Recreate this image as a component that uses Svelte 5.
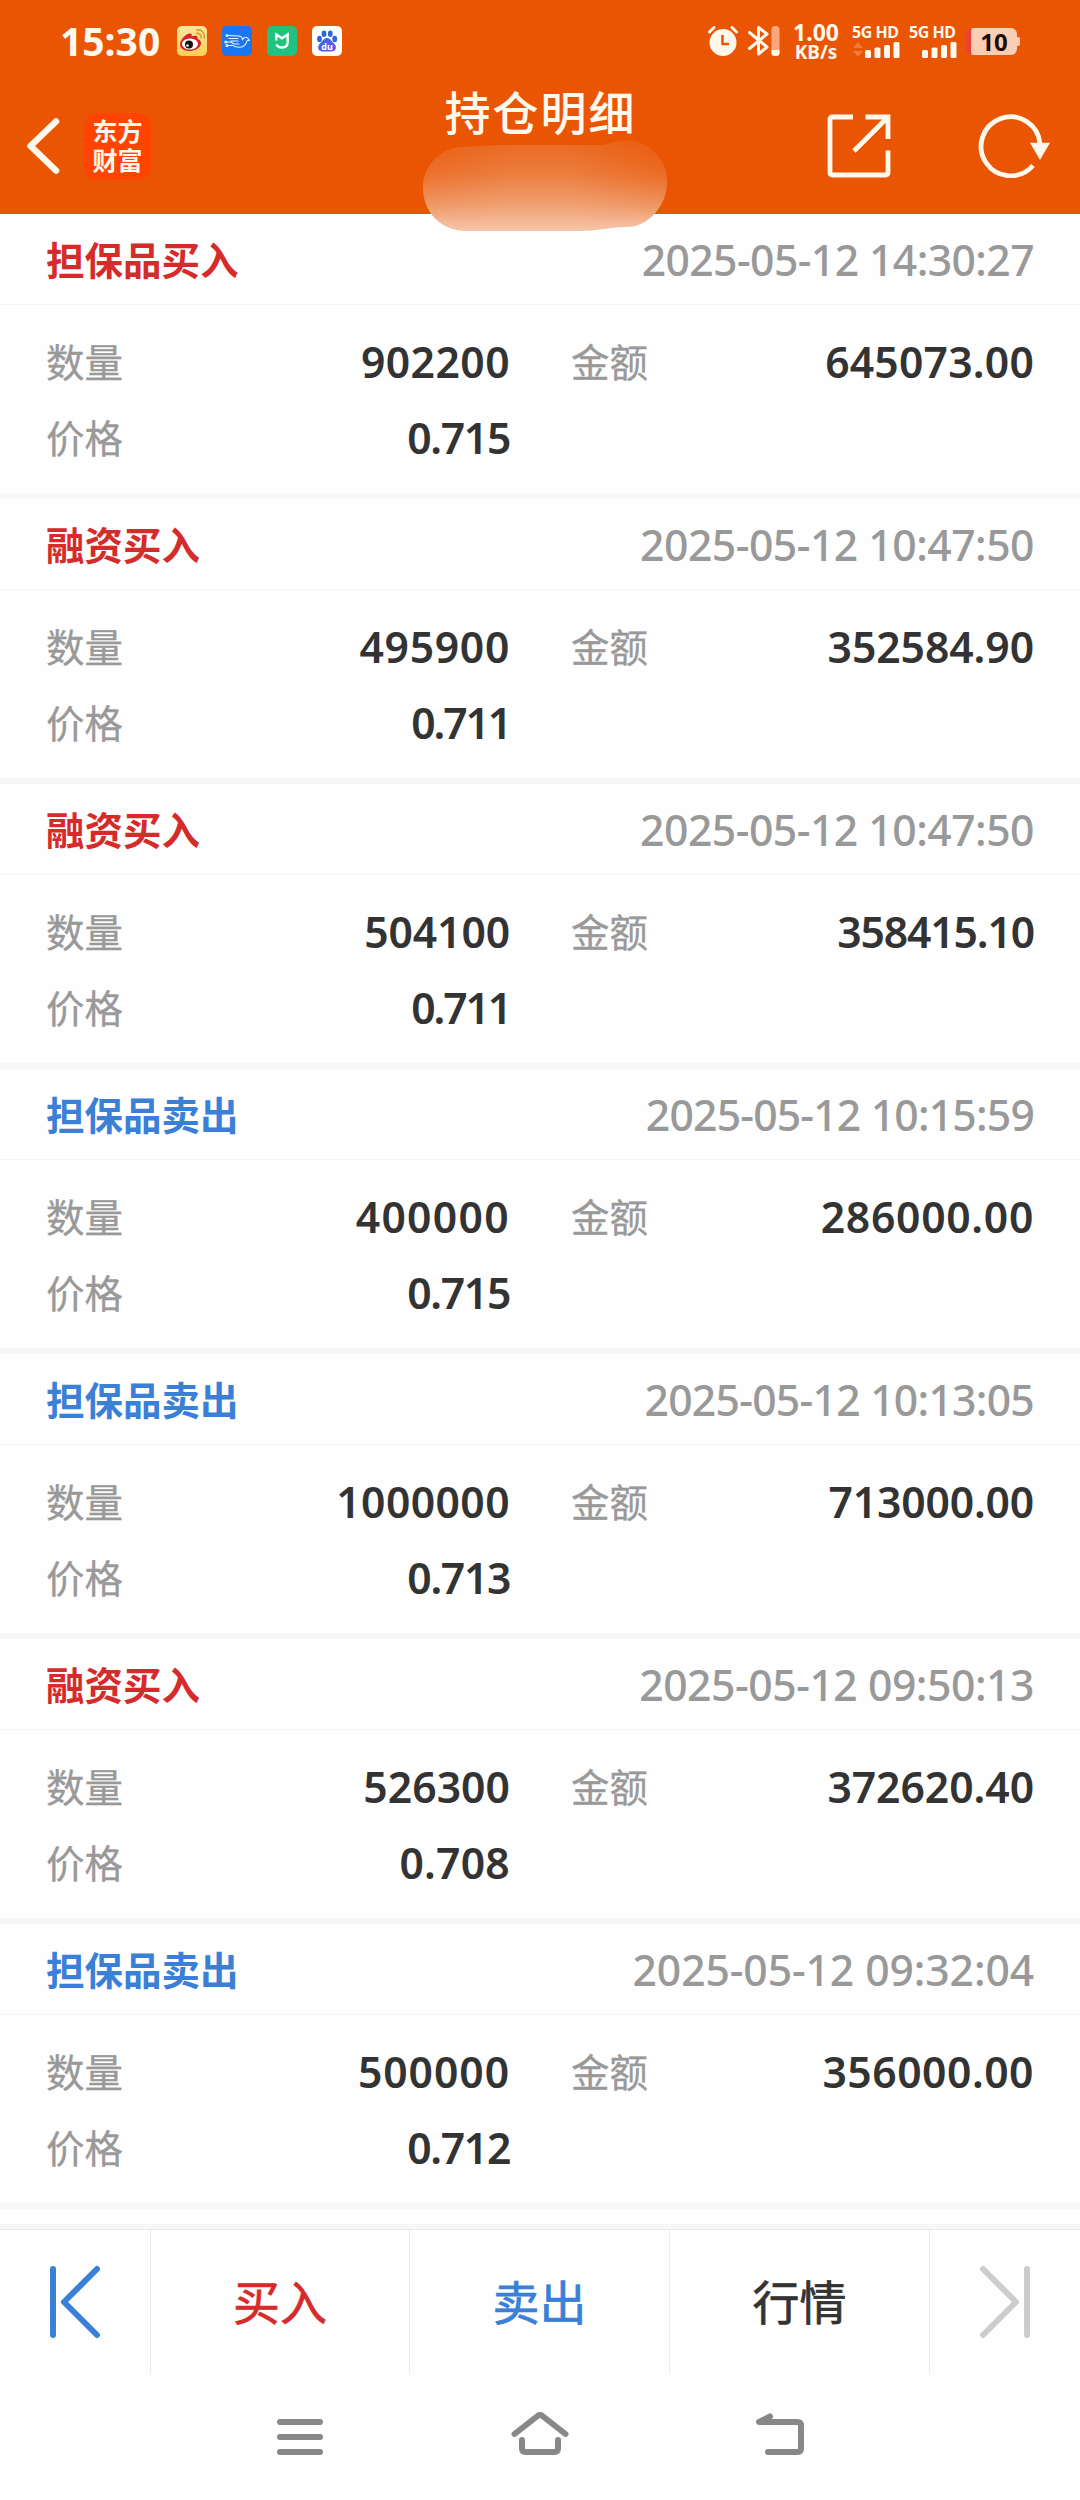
<script>
  const trades = [
    { type: "担保品买入", side: "buy", time: "2025-05-12 14:30:27", count: "902200", amount: "645073.00", price: "0.715" },
    { type: "融资买入", side: "buy", time: "2025-05-12 10:47:50", count: "495900", amount: "352584.90", price: "0.711" },
    { type: "融资买入", side: "buy", time: "2025-05-12 10:47:50", count: "504100", amount: "358415.10", price: "0.711" },
    { type: "担保品卖出", side: "sell", time: "2025-05-12 10:15:59", count: "400000", amount: "286000.00", price: "0.715" },
    { type: "担保品卖出", side: "sell", time: "2025-05-12 10:13:05", count: "1000000", amount: "713000.00", price: "0.713" },
    { type: "融资买入", side: "buy", time: "2025-05-12 09:50:13", count: "526300", amount: "372620.40", price: "0.708" },
    { type: "担保品卖出", side: "sell", time: "2025-05-12 09:32:04", count: "500000", amount: "356000.00", price: "0.712" },
  ];

  // Noto Sans digits are all one width, so tighten or loosen each number
  // towards the width it would have with proportional figures
  const bold = { 0: 25.8, 1: 19.5, 2: 23.6, 3: 23.4, 4: 25.8, 5: 23.6, 6: 25, 7: 23, 8: 25, 9: 25, ".": 11.5 };
  const light = { 0: 24.8, 1: 18.2, 2: 23.3, 3: 23.3, 4: 25, 5: 23.4, 6: 24, 7: 21, 8: 24, 9: 23.5, "-": 19.5, ":": 10.8, " ": 13 };
  const notoWidth = { ".": 12, "-": 13.7, ":": 11.7, " ": 11.1 };

  const spacing = (text, widths) => {
    let diff = 0;
    for (const c of text) {
      diff += widths[c] - (notoWidth[c] ?? 24.5);
    }
    return (diff / text.length).toFixed(2) + "px";
  };
</script>

<div class="page">
  <header>
    <div class="status">
      <div class="left">
        <span class="clock">15:30</span>
        <!-- weibo -->
        <svg class="app" viewBox="0 0 30 30">
          <defs>
            <linearGradient id="weibo" x1="0" y1="0" x2="0" y2="1">
              <stop offset="0" stop-color="#fbe7a0" />
              <stop offset="1" stop-color="#fdce54" />
            </linearGradient>
          </defs>
          <rect width="30" height="30" rx="5" fill="url(#weibo)" />
          <path d="M3 18.500c0-5 6-11 10-11 2 0 2 2 1.500 3 3-1.500 7-1 6 2.500 2 .5 3.500 2 3.500 4 0 4-5 8-11 8s-10-2.500-10-6.500z" fill="#d8212a" />
          <ellipse cx="13" cy="18" rx="8" ry="5.500" fill="#fff" />
          <circle cx="12" cy="18.500" r="4" fill="#111" />
          <circle cx="10.500" cy="19.500" r="1.300" fill="#fff" />
          <path d="M20 7.500c2.500-.5 4.500 1.500 4 4M20 3.800c5-.5 8 3 7.300 8" fill="none" stroke="#e0a030" stroke-width="1.800" stroke-linecap="round" />
        </svg>
        <!-- bird -->
        <svg class="app" viewBox="0 0 30 30">
          <rect width="30" height="30" rx="5" fill="#1977f3" />
          <g fill="none" stroke="#e8f3ff" stroke-width="1.100" stroke-linecap="round" stroke-linejoin="round">
            <path d="M6 9.500l11 .5c2 .3 3.500 2 3.500 4 1-2.500 3-3.500 5-2l2 2.300-2.500.5c-1 4-4 6.500-8 6.500-3 0-5-1-7-2.200" />
            <path d="M7 12.500h9M9 15h7M5 16h4l3 2h5M6 19.500h4" />
            <circle cx="5" cy="9.500" r="1" />
            <circle cx="3.800" cy="16" r="1" />
            <circle cx="5" cy="19.500" r="1" />
          </g>
        </svg>
        <!-- mi home -->
        <svg class="app" viewBox="0 0 30 30">
          <rect width="30" height="30" rx="5" fill="#21c280" />
          <path d="M9.300 14.500V8.500l5.700 3.800 5.700-3.800v7.500c0 3.500-2.300 5.500-5.700 5.500-2.800 0-4.700-1-5.500-3.200" fill="none" stroke="#fff" stroke-width="2.300" />
        </svg>
        <!-- baidu -->
        <svg class="app" viewBox="0 0 30 30">
          <defs>
            <linearGradient id="paw" x1="0" y1="0" x2="1" y2="1">
              <stop offset="0" stop-color="#2b6be4" />
              <stop offset="1" stop-color="#7b52e0" />
            </linearGradient>
          </defs>
          <rect width="30" height="30" rx="5" fill="#fff" />
          <g fill="#2c66dc">
            <ellipse cx="7.500" cy="13" rx="2.400" ry="3.200" />
            <ellipse cx="12" cy="7.800" rx="2.400" ry="3.200" />
            <ellipse cx="18.300" cy="7.800" rx="2.400" ry="3.200" />
            <ellipse cx="22.700" cy="13" rx="2.400" ry="3.200" />
          </g>
          <path d="M15 12c3 0 4 2.500 6 4.500 2 1.800 3.500 3.500 2.800 6-.6 2.500-3 3.200-5 3h-7.500c-2 .2-4.500-.5-5-3-.6-2.500.8-4.200 2.700-6 2-2 3-4.500 6-4.500z" fill="url(#paw)" />
          <text x="15" y="24" class="du">du</text>
        </svg>
      </div>
      <div class="right">
        <svg class="alarm" viewBox="0 0 30 30">
          <circle cx="15" cy="16.500" r="13.500" fill="#fff8ec" />
          <path d="M1.500 6L6 1.500M24 1.500L28.500 6" stroke="#fff8ec" stroke-width="3" stroke-linecap="round" />
          <path d="M14.500 9v9h6.500" fill="none" stroke="#ea5504" stroke-width="2.500" />
        </svg>
        <svg class="bluetooth" viewBox="0 0 34 32">
          <path d="M2.500 7.500L20 22l-8.500 7V2.500L20 9 2.500 23.500" fill="none" stroke="#fff8ec" stroke-width="3" stroke-linecap="round" stroke-linejoin="round" />
          <rect x="24.500" y="1" width="8" height="30" rx="3.500" fill="#f9a67c" />
          <path d="M24.500 25h8v2.500a3.500 3.500 0 0 1-3.500 3.500h-1a3.500 3.500 0 0 1-3.500-3.500z" fill="#fff8ec" />
        </svg>
        <div class="speed"><b>1.00</b><b class="unit">KB/s</b></div>
        <div class="signal">
          <span>5G HD</span>
          <svg viewBox="0 0 48 17">
            <path d="M1 7l5-6 5 6zM1 10l5 6 5-6z" fill="#f37a35" />
            <g fill="#fff8ec">
              <rect x="13" y="9" width="6" height="8" rx="1.500" />
              <rect x="22.500" y="6.500" width="6" height="10.500" rx="1.500" />
              <rect x="32" y="4" width="6" height="13" rx="1.500" />
              <rect x="41.500" y="1" width="6" height="16" rx="1.500" />
            </g>
          </svg>
        </div>
        <div class="signal">
          <span>5G HD</span>
          <svg viewBox="0 0 48 17">
            <g fill="#fff8ec">
              <rect x="13" y="9" width="6" height="8" rx="1.500" />
              <rect x="22.500" y="6.500" width="6" height="10.500" rx="1.500" />
              <rect x="32" y="4" width="6" height="13" rx="1.500" />
              <rect x="41.500" y="1" width="6" height="16" rx="1.500" />
            </g>
          </svg>
        </div>
        <div class="battery"><span>10</span></div>
      </div>
    </div>

    <div class="titlebar">
      <div class="back">
        <svg class="chevron" viewBox="0 0 34 56">
          <path d="M30 3.500L4.500 28 30 52.500" fill="none" stroke="#fff8ec" stroke-width="6.500" stroke-linecap="round" stroke-linejoin="round" />
        </svg>
        <div class="logo"><span>东方</span><span>财富</span></div>
      </div>
      <h1>持仓明细</h1>
      <div class="actions">
        <svg class="share" viewBox="0 0 64 64">
          <path d="M26 3H5a2 2 0 0 0-2 2v54a2 2 0 0 0 2 2h54a2 2 0 0 0 2-2V36.500M38.500 3H61v22M61 3L27 37" fill="none" stroke="#fff8ec" stroke-width="4.800" />
        </svg>
        <svg class="refresh" viewBox="0 0 72 64">
          <path d="M55 51.500A29.500 29.500 0 1 1 62 30" fill="none" stroke="#fff8ec" stroke-width="4.800" />
          <path d="M52 28.700h20L62 46z" fill="#fff8ec" />
        </svg>
      </div>
    </div>

    <!-- smudged account name -->
    <svg class="smudge" viewBox="0 0 246 92">
      <defs>
        <linearGradient id="smudge" x1="0" y1="0" x2="0" y2="1">
          <stop offset="0" stop-color="#ea6a22" />
          <stop offset="0.350" stop-color="#ec7c3c" />
          <stop offset="0.700" stop-color="#f09f70" />
          <stop offset="1" stop-color="#f6c5aa" />
        </linearGradient>
        <linearGradient id="smudge-side" x1="0" y1="0" x2="1" y2="0">
          <stop offset="0" stop-color="#ea5504" stop-opacity="0.500" />
          <stop offset="0.350" stop-color="#ea5504" stop-opacity="0" />
          <stop offset="0.600" stop-color="#ea5504" stop-opacity="0" />
          <stop offset="1" stop-color="#ea5504" stop-opacity="0.700" />
        </linearGradient>
        <linearGradient id="fade" x1="0" y1="0" x2="0" y2="1">
          <stop offset="0" stop-color="#fff" />
          <stop offset="0.900" stop-color="#000" />
        </linearGradient>
        <mask id="upper"><rect width="246" height="92" fill="url(#fade)" /></mask>
      </defs>
      <path d="M1 48C1 25 19 8 40 7c20-1 35-2 60-2h80c6 0 10-4.500 24-4.500 24 0 41 18.500 41 41.500 0 24-19 45-40 45-20 0-25 4-50 4H44C19 91 1 72 1 48z" fill="url(#smudge)" />
      <path mask="url(#upper)" d="M1 48C1 25 19 8 40 7c20-1 35-2 60-2h80c6 0 10-4.500 24-4.500 24 0 41 18.500 41 41.500 0 24-19 45-40 45-20 0-25 4-50 4H44C19 91 1 72 1 48z" fill="url(#smudge-side)" />
    </svg>
  </header>

  <main>
    {#each trades as trade}
      <section class="trade">
        <div class="trade-head">
          <span class="type {trade.side}">{trade.type}</span>
          <span class="time" style="letter-spacing: {spacing(trade.time, light)}">{trade.time}</span>
        </div>
        <div class="trade-body">
          <span class="label">数量</span>
          <span class="value" style="letter-spacing: {spacing(trade.count, bold)}">{trade.count}</span>
          <span class="label second">金额</span>
          <span class="value" style="letter-spacing: {spacing(trade.amount, bold)}">{trade.amount}</span>
          <span class="label">价格</span>
          <span class="value" style="letter-spacing: {spacing(trade.price, bold)}">{trade.price}</span>
        </div>
      </section>
    {/each}
  </main>

  <footer>
    <div class="tab">
      <svg class="skip" viewBox="0 0 52 74">
        <path d="M4 4v66M48 4L15 37l33 33" fill="none" stroke="#3a80d6" stroke-width="6" stroke-linecap="round" stroke-linejoin="round" />
      </svg>
    </div>
    <div class="tab buy"><span>买入</span></div>
    <div class="tab sell"><span>卖出</span></div>
    <div class="tab"><span>行情</span></div>
    <div class="tab">
      <svg class="skip" viewBox="0 0 52 74">
        <path d="M48 4v66M4 4l33 33L4 70" fill="none" stroke="#ccc" stroke-width="6" stroke-linecap="round" stroke-linejoin="round" />
      </svg>
    </div>
  </footer>

  <nav>
    <svg viewBox="0 0 60 50">
      <path d="M10 10h40M10 25h40M10 40h40" />
    </svg>
    <svg viewBox="0 0 60 50">
      <path d="M4.500 22L27.500 4q2.500-2 5 0L55.500 22M12 28v8.500q0 3.500 3.500 3.500h29q3.500 0 3.500-3.500V28" />
    </svg>
    <svg viewBox="0 0 60 50">
      <path d="M20 4.500L9 10h38.500q3.500 0 3.500 3.500v23q0 3.500-3.500 3.500H18" />
    </svg>
  </nav>
</div>

<style>
  :global(body) {
    background: #fefefe;
  }
  .page {
    width: 1080px;
    height: 2500px;
    display: flex;
    flex-direction: column;
    overflow: hidden;
    background: #fefefe;
    font-family: "Noto Sans", "Noto Sans CJK SC", sans-serif;
    color: #333;
  }
  header {
    position: relative;
    height: 214px;
    flex: none;
    background: #ea5504;
    color: #fff8ec;
  }
  .status {
    height: 82px;
    display: flex;
    justify-content: space-between;
    padding: 0 63px 0 60px;
  }
  .left,
  .right {
    display: flex;
    align-items: center;
  }
  .right > * {
    flex: none;
  }
  .left {
    gap: 15px;
  }
  .clock {
    width: 102px;
    font-size: 39px;
    font-weight: 700;
    line-height: 82px;
  }
  .app {
    width: 30px;
    height: 30px;
  }
  .du {
    font: 700 9px "Noto Sans", sans-serif;
    fill: #fff;
    text-anchor: middle;
  }
  .alarm {
    width: 30px;
    height: 30px;
    margin-right: 9px;
  }
  .bluetooth {
    width: 34px;
    height: 32px;
    margin-right: 11px;
  }
  .speed {
    width: 48px;
    display: flex;
    flex-direction: column;
    align-items: center;
    font-size: 23px;
    line-height: 21px;
    margin-right: 12px;
  }
  .speed .unit {
    font-size: 19px;
    line-height: 18px;
  }
  .signal {
    width: 48px;
    margin-right: 9px;
    display: flex;
    flex-direction: column;
    font-size: 16px;
    font-weight: 700;
    line-height: 16px;
    letter-spacing: -0.5px;
    white-space: nowrap;
  }
  .signal svg {
    width: 48px;
    height: 17px;
    margin-top: 1px;
  }
  .battery {
    position: relative;
    box-sizing: border-box;
    width: 51px;
    height: 27px;
    border-radius: 6px;
    border-left: 5px solid #ee4136;
    background: #fbcdb5;
    color: #1c0d05;
    font-size: 24px;
    font-weight: 700;
    line-height: 28px;
    text-align: center;
  }
  .battery::after {
    content: "";
    position: absolute;
    right: -3px;
    top: 9px;
    width: 3px;
    height: 9px;
    border-radius: 0 2px 2px 0;
    background: #fbcdb5;
  }
  .titlebar {
    height: 132px;
    display: grid;
    grid-template-columns: 1fr auto 1fr;
    padding: 0 30px 0 26px;
  }
  .back {
    display: flex;
    align-items: center;
    height: 128px;
  }
  .chevron {
    width: 34px;
    height: 56px;
    margin-right: 24px;
  }
  .logo {
    width: 67px;
    height: 67px;
    border-radius: 14px;
    background: #ff4301;
    display: flex;
    flex-direction: column;
    align-items: center;
    justify-content: center;
    font-family: "Noto Sans CJK SC", sans-serif;
    font-size: 25px;
    font-weight: 700;
    line-height: 29px;
    padding-bottom: 2px;
    box-sizing: border-box;
  }
  h1 {
    margin: 0;
    padding-left: 5px;
    font-size: 46px;
    font-weight: 500;
    line-height: 61px;
    letter-spacing: 2px;
  }
  .actions {
    display: flex;
    align-items: center;
    justify-content: flex-end;
    height: 128px;
    gap: 87px;
  }
  .share {
    width: 64px;
    height: 64px;
  }
  .refresh {
    width: 72px;
    height: 64px;
  }
  .smudge {
    position: absolute;
    left: 422px;
    top: 140px;
    width: 246px;
    height: 92px;
    z-index: 1;
  }
  main {
    height: 2015px;
    flex: none;
    overflow: hidden;
  }
  .trade {
    height: 279px;
    border-bottom: 6px solid #f5f7f9;
  }
  .trade-head {
    height: 90px;
    display: flex;
    justify-content: space-between;
    padding: 0 46px 0 46px;
    border-bottom: 1px solid #f5f5f5;
    line-height: 92px;
  }
  .type {
    font-size: 38.5px;
    font-weight: 700;
  }
  .buy {
    color: #d52b2b;
  }
  .sell {
    color: #3a80d6;
  }
  .time {
    font-size: 42.7px;
    font-weight: 500;
    color: #999;
  }
  .trade-body {
    display: grid;
    grid-template-columns: 110px 354px 160px 1fr;
    grid-auto-rows: 76px;
    padding: 19px 46px 0 46px;
    line-height: 76px;
  }
  .label {
    font-size: 38.5px;
    color: #999;
    -webkit-text-stroke: 0.3px #999;
  }
  .second {
    padding-left: 61px;
  }
  .value {
    font-size: 42.7px;
    font-weight: 600;
    text-align: right;
  }
  footer {
    box-sizing: border-box;
    height: 145px;
    flex: none;
    display: grid;
    grid-template-columns: 150px 259px 260px 260px 151px;
    border-top: 1px solid #e9eaec;
    box-shadow: 0 -5px 0 #f5f7f9;
    position: relative;
    font-size: 47px;
  }
  .tab {
    display: flex;
    align-items: center;
    justify-content: center;
    border-left: 1px solid #ececec;
  }
  .tab:first-child {
    border-left: 0;
  }
  .tab span {
    padding-bottom: 5px;
    -webkit-text-stroke: 0.7px currentColor;
  }
  .skip {
    width: 52px;
    height: 74px;
  }
  nav {
    display: flex;
    justify-content: center;
    gap: 180px;
    padding-top: 38px;
  }
  nav svg {
    width: 60px;
    height: 50px;
    fill: none;
    stroke: #888;
    stroke-width: 6;
    stroke-linecap: round;
    stroke-linejoin: round;
  }
</style>
